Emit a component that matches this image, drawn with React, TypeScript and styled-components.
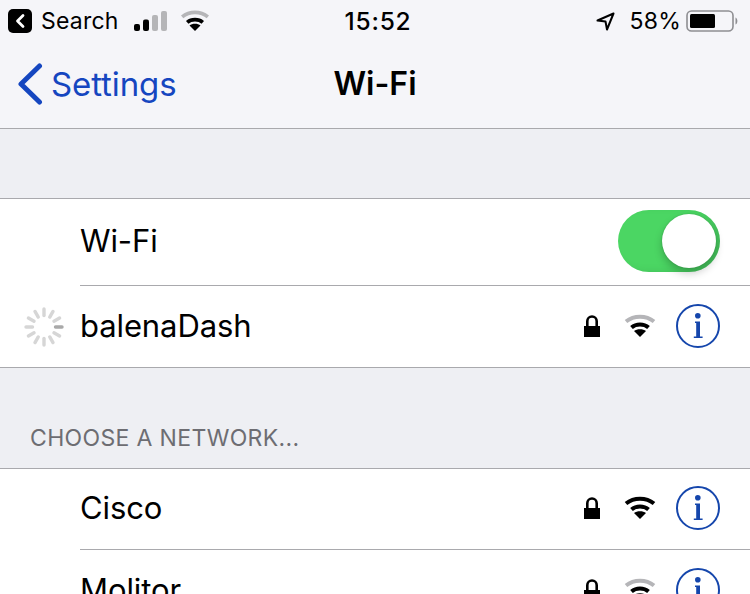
import React from "react";
import styled, { createGlobalStyle } from "styled-components";

const Global = createGlobalStyle`
  html, body { margin: 0; padding: 0; background: #ffffff; }
  body { width: 750px; height: 594px; overflow: hidden; font-family: Inter, "Liberation Sans", sans-serif; }
`;

const Page = styled.div`
  width: 750px;
  height: 594px;
  overflow: hidden;
  background: #eeeff3;
  color: #000;
`;

const Header = styled.header`
  background: #f5f5f9;
  border-bottom: 1px solid #a9a9ad;
  height: 128px;
`;

const StatusBar = styled.div`
  height: 42px;
  display: grid;
  grid-template-columns: 1fr auto 1fr;
  align-items: center;
`;

const StatusLeft = styled.div`
  display: flex;
  align-items: center;
  padding-left: 8px;
`;

const StatusRight = styled.div`
  display: flex;
  align-items: center;
  justify-content: flex-end;
  padding-right: 11px;
`;

const BackBadge = styled.div`
  width: 24px;
  height: 24px;
  border-radius: 5px;
  background: #000;
  display: flex;
  align-items: center;
  justify-content: center;
  margin-right: 9px;
`;

const StatusText = styled.span<{ $gap?: number }>`
  font-size: 23px;
  letter-spacing: 0.2px;
  line-height: 28px;
  white-space: nowrap;
  margin-left: ${(p) => p.$gap ?? 0}px;
`;

const Clock = styled(StatusText)`
  font-size: 24.5px;
  font-weight: 500;
  letter-spacing: 0.8px;
`;

const SignalBars = styled.svg`
  margin-left: 15px;
  margin-right: 13px;
`;

const BatteryIcon = styled.svg`
  margin-left: 5px;
`;

const NavBar = styled.nav`
  height: 83px;
  display: grid;
  grid-template-columns: 1fr auto 1fr;
  align-items: center;
`;

const BackLink = styled.div`
  display: flex;
  align-items: center;
  gap: 8px;
  padding-left: 17px;
  color: #1546c0;
  font-size: 33px;
  letter-spacing: -0.1px;
`;

const Title = styled.h1`
  margin: 0;
  font-size: 32px;
  font-weight: 600;
  letter-spacing: 0;
`;

const Spacer = styled.div<{ $h: number }>`
  height: ${(p) => p.$h}px;
`;

const SectionLabel = styled.div`
  height: 100px;
  box-sizing: border-box;
  padding: 57px 0 0 30px;
  font-size: 23px;
  line-height: 27px;
  letter-spacing: 0.35px;
  color: #6d6d72;
`;

const Group = styled.section`
  background: #fff;
  border-top: 1px solid #a9a9ad;
  border-bottom: 1px solid #a9a9ad;
`;

const Row = styled.div`
  display: flex;
  background: #fff;
`;

const Leading = styled.div`
  width: 80px;
  flex: none;
  box-sizing: border-box;
  padding-left: 24px;
  display: flex;
  align-items: center;
`;

const RowBody = styled.div<{ $h: number; $line?: boolean }>`
  flex: 1;
  height: ${(p) => p.$h}px;
  box-sizing: border-box;
  display: flex;
  align-items: center;
  justify-content: space-between;
  padding-right: 30px;
  padding-bottom: 2px;
  border-bottom: ${(p) => (p.$line ? "1px solid #a9a9ad" : "none")};
`;

const Label = styled.span`
  font-size: 31px;
  letter-spacing: -0.1px;
  margin-bottom: 1px;
`;

const Accessories = styled.div`
  display: flex;
  align-items: center;
`;

const Toggle = styled.div`
  width: 102px;
  height: 62px;
  border-radius: 31px;
  background: #4bd663;
  display: flex;
  align-items: center;
  justify-content: flex-end;
  padding-right: 4px;
  box-sizing: border-box;
  box-shadow: inset -6px -2px 8px -4px rgba(40, 110, 60, 0.35);
`;

const Knob = styled.div`
  width: 54px;
  height: 54px;
  border-radius: 50%;
  background: #fff;
  box-shadow: 0 5px 9px rgba(0, 0, 0, 0.22), 0 0 2px rgba(0, 0, 0, 0.2);
`;

const InfoIcon = styled.svg`
  margin-left: 20px;
`;

const WifiHolder = styled.svg`
  margin-left: 24px;
`;

const Wifi = ({ outer = "#000", w = 32, h = 24, className }: { outer?: string; w?: number; h?: number; className?: string }) => (
  <WifiHolder className={className} width={w} height={h} viewBox="0 0 32 24" fill="none">
    <path d="M2 7.5C10 1 22 1 30 7.5" stroke={outer} strokeWidth="4" />
    <path d="M7.5 13.5C12 9.5 20 9.5 24.5 13.5" stroke="#000" strokeWidth="4" />
    <path d="M16 23L10 17C13 14.5 19 14.5 22 17Z" fill="#000" />
  </WifiHolder>
);

const StatusWifi = styled(Wifi)`
  margin-left: 0;
`;

const Lock = () => (
  <svg width="16" height="22" viewBox="0 0 16 22" fill="none">
    <path d="M3.3 12V6.2a4.7 4.7 0 0 1 9.4 0V12" stroke="#000" strokeWidth="2.6" />
    <rect x="0" y="11" width="16" height="11" fill="#000" />
  </svg>
);

const Info = () => (
  <InfoIcon width="44" height="44" viewBox="0 0 44 44" fill="none">
    <circle cx="22" cy="22" r="21" stroke="#1546ac" strokeWidth="2" />
    <circle cx="21.8" cy="11.7" r="2.8" fill="#1546ac" />
    <path d="M19 17.5H24V32.5H26.6V34H17.8V32.5H20.2V19H19Z" fill="#1546ac" />
  </InfoIcon>
);

const Spinner = () => (
  <svg width="40" height="40" viewBox="-20 -20 40 40">
    {Array.from({ length: 12 }, (_, i) => (
      <line
        key={i}
        x1="11.5"
        y1="0"
        x2="18"
        y2="0"
        stroke={i === 0 ? "#a9a9a9" : "#d6d6d6"}
        strokeWidth="3.4"
        strokeLinecap="round"
        transform={`rotate(${i * 30})`}
      />
    ))}
  </svg>
);

const Net = ({ name, outer, h, line }: { name: string; outer?: string; h: number; line?: boolean }) => (
  <Row>
    <Leading />
    <RowBody $h={h} $line={line}>
      <Label>{name}</Label>
      <Accessories>
        <Lock />
        <Wifi outer={outer} />
        <Info />
      </Accessories>
    </RowBody>
  </Row>
);

export default function App() {
  return (
    <Page>
      <Global />
      <Header>
        <StatusBar>
          <StatusLeft>
            <BackBadge>
              <svg width="12" height="16" viewBox="0 0 12 16" fill="none">
                <path d="M9 2.5L3.5 8L9 13.5" stroke="#fff" strokeWidth="2.8" strokeLinecap="round" strokeLinejoin="round" />
              </svg>
            </BackBadge>
            <StatusText>Search</StatusText>
            <SignalBars width="33" height="20" viewBox="0 0 33 20">
              <rect x="0" y="13" width="6" height="7" rx="2" fill="#000" />
              <rect x="9" y="8.5" width="6" height="11.5" rx="2" fill="#000" />
              <rect x="18" y="4" width="6" height="16" rx="2" fill="#b5b5b8" />
              <rect x="27" y="0" width="6" height="20" rx="2" fill="#b5b5b8" />
            </SignalBars>
            <StatusWifi outer="#b5b5b8" w={30} h={22} />
          </StatusLeft>
          <Clock $gap={6}>15:52</Clock>
          <StatusRight>
            <svg width="19" height="19" viewBox="0 0 19 19" fill="none">
              <path d="M17.5 1.5L1.5 8.5L9.5 9.5L11 17.5Z" stroke="#000" strokeWidth="2" strokeLinejoin="round" />
            </svg>
            <StatusText $gap={15}>58%</StatusText>
            <BatteryIcon width="53" height="22" viewBox="0 0 53 22" fill="none">
              <rect x="1" y="1" width="46" height="20" rx="4.5" stroke="#8e8e92" strokeWidth="1.6" />
              <rect x="4" y="4" width="25" height="14" rx="1.5" fill="#000" />
              <path d="M49.5 7.5C52 8.5 52 13.5 49.5 14.5Z" fill="#8e8e92" />
            </BatteryIcon>
          </StatusRight>
        </StatusBar>
        <NavBar>
          <BackLink>
            <svg width="26" height="42" viewBox="0 0 26 42" fill="none">
              <path d="M22.5 3L4 21L22.5 39" stroke="#1546c0" strokeWidth="5" strokeLinecap="round" strokeLinejoin="round" />
            </svg>
            Settings
          </BackLink>
          <Title>Wi-Fi</Title>
          <div />
        </NavBar>
      </Header>
      <Spacer $h={69} />
      <Group>
        <Row>
          <Leading />
          <RowBody $h={87} $line>
            <Label>Wi-Fi</Label>
            <Toggle>
              <Knob />
            </Toggle>
          </RowBody>
        </Row>
        <Row>
          <Leading>
            <Spinner />
          </Leading>
          <RowBody $h={81}>
            <Label>balenaDash</Label>
            <Accessories>
              <Lock />
              <Wifi outer="#b5b5b8" />
              <Info />
            </Accessories>
          </RowBody>
        </Row>
      </Group>
      <SectionLabel>CHOOSE A NETWORK...</SectionLabel>
      <Group>
        <Net name="Cisco" h={81} line />
        <Net name="Molitor" outer="#b5b5b8" h={81} />
      </Group>
    </Page>
  );
}
